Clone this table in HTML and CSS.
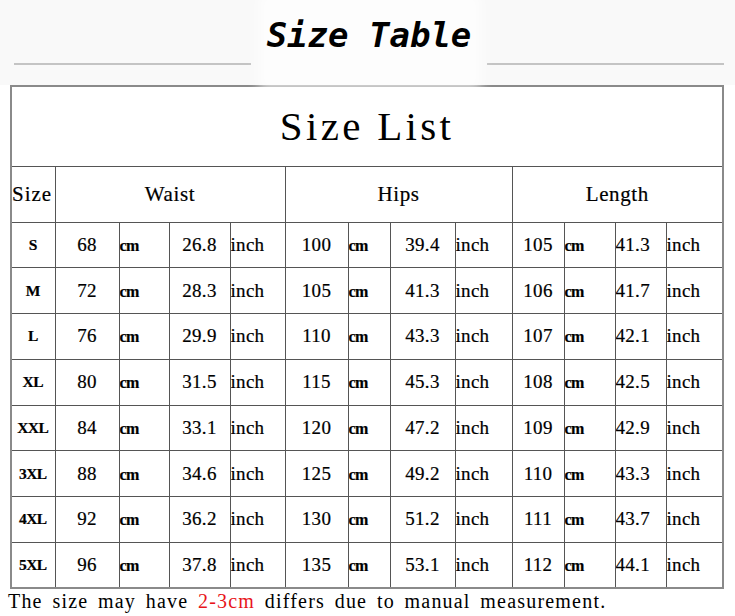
FILE: index.html
```html
<!DOCTYPE html>
<html lang="en">
<head>
<meta charset="utf-8">
<title>Size Table</title>
<link rel="stylesheet" href="styles.css">
</head>
<body>
<div class="banner">
  <div class="rule"></div>
  <div class="banner-title"><span>Size Table</span></div>
  <div class="rule"></div>
</div>
<table class="sizes">
  <colgroup>
    <col style="width:44px"><col style="width:64px"><col style="width:50px"><col style="width:61px"><col style="width:55px">
    <col style="width:63px"><col style="width:42px"><col style="width:65px"><col style="width:57px">
    <col style="width:52px"><col style="width:51px"><col style="width:51px"><col style="width:57px">
  </colgroup>
  <tr class="title-row"><td colspan="13" class="list-title">Size List</td></tr>
  <tr class="head-row">
    <td class="head size-head">Size</td>
    <td class="head" colspan="4">Waist</td>
    <td class="head" colspan="4">Hips</td>
    <td class="head" colspan="4">Length</td>
  </tr>
  <tr class="data-row"><td class="sz">S</td><td class="num">68</td><td class="unit cm">cm</td><td class="num">26.8</td><td class="unit">inch</td><td class="num">100</td><td class="unit cm">cm</td><td class="num">39.4</td><td class="unit">inch</td><td class="num">105</td><td class="unit cm">cm</td><td class="lnum">41.3</td><td class="unit">inch</td></tr>
  <tr class="data-row"><td class="sz">M</td><td class="num">72</td><td class="unit cm">cm</td><td class="num">28.3</td><td class="unit">inch</td><td class="num">105</td><td class="unit cm">cm</td><td class="num">41.3</td><td class="unit">inch</td><td class="num">106</td><td class="unit cm">cm</td><td class="lnum">41.7</td><td class="unit">inch</td></tr>
  <tr class="data-row"><td class="sz">L</td><td class="num">76</td><td class="unit cm">cm</td><td class="num">29.9</td><td class="unit">inch</td><td class="num">110</td><td class="unit cm">cm</td><td class="num">43.3</td><td class="unit">inch</td><td class="num">107</td><td class="unit cm">cm</td><td class="lnum">42.1</td><td class="unit">inch</td></tr>
  <tr class="data-row"><td class="sz">XL</td><td class="num">80</td><td class="unit cm">cm</td><td class="num">31.5</td><td class="unit">inch</td><td class="num">115</td><td class="unit cm">cm</td><td class="num">45.3</td><td class="unit">inch</td><td class="num">108</td><td class="unit cm">cm</td><td class="lnum">42.5</td><td class="unit">inch</td></tr>
  <tr class="data-row"><td class="sz">XXL</td><td class="num">84</td><td class="unit cm">cm</td><td class="num">33.1</td><td class="unit">inch</td><td class="num">120</td><td class="unit cm">cm</td><td class="num">47.2</td><td class="unit">inch</td><td class="num">109</td><td class="unit cm">cm</td><td class="lnum">42.9</td><td class="unit">inch</td></tr>
  <tr class="data-row"><td class="sz">3XL</td><td class="num">88</td><td class="unit cm">cm</td><td class="num">34.6</td><td class="unit">inch</td><td class="num">125</td><td class="unit cm">cm</td><td class="num">49.2</td><td class="unit">inch</td><td class="num">110</td><td class="unit cm">cm</td><td class="lnum">43.3</td><td class="unit">inch</td></tr>
  <tr class="data-row"><td class="sz">4XL</td><td class="num">92</td><td class="unit cm">cm</td><td class="num">36.2</td><td class="unit">inch</td><td class="num">130</td><td class="unit cm">cm</td><td class="num">51.2</td><td class="unit">inch</td><td class="num">111</td><td class="unit cm">cm</td><td class="lnum">43.7</td><td class="unit">inch</td></tr>
  <tr class="data-row"><td class="sz">5XL</td><td class="num">96</td><td class="unit cm">cm</td><td class="num">37.8</td><td class="unit">inch</td><td class="num">135</td><td class="unit cm">cm</td><td class="num">53.1</td><td class="unit">inch</td><td class="num">112</td><td class="unit cm">cm</td><td class="lnum">44.1</td><td class="unit">inch</td></tr>
</table>
<p class="note">The size may have <span class="red">2-3cm</span> differs due to manual measurement.</p>
</body>
</html>
```
FILE: styles.css
```css
html, body {
  margin: 0;
  padding: 0;
  background: #ffffff;
}

body {
  width: 735px;
  height: 616px;
  overflow: hidden;
  font-family: "Liberation Serif", "DejaVu Serif", serif;
  color: #000;
}

.banner {
  position: relative;
  display: flex;
  height: 85px;
  padding: 0 11px 0 14px;
  background: #f9f9f9;
}

.rule {
  flex: 0 0 237px;
  height: 2px;
  margin-top: 63px;
  background: #c4c4c4;
}

.banner-title {
  position: relative;
  flex: 1;
  text-align: center;
}

.banner-title::before {
  content: "";
  position: absolute;
  left: 8px;
  right: 6px;
  top: -6px;
  height: 96px;
  background: rgba(255, 255, 255, 0.7);
  filter: blur(6px);
  z-index: 1;
}

.banner-title span {
  position: relative;
  z-index: 2;
  display: inline-block;
  margin-top: 15px;
  font-family: "DejaVu Sans Mono", monospace;
  font-weight: bold;
  font-style: oblique;
  font-size: 34px;
  line-height: 40px;
  color: #000;
}

.sizes {
  margin-left: 10px;
  width: 712px;
  table-layout: fixed;
  border-collapse: collapse;
  border: 2px solid #8a8a8a;
  -webkit-text-stroke: 0.2px #000;
}

.sizes td {
  border: 1px solid #555;
  padding: 0;
  vertical-align: middle;
  white-space: nowrap;
  overflow: hidden;
}

.title-row {
  height: 80px;
}

.list-title {
  text-align: center;
  font-size: 41px;
  letter-spacing: 3.3px;
  padding-top: 4px;
  -webkit-text-stroke: 0;
}

.head-row {
  height: 56px;
}

.head {
  text-align: center;
  font-size: 21px;
  letter-spacing: 0.6px;
  padding-bottom: 3px;
}

.size-head {
  text-align: left;
  padding-left: 1px;
  letter-spacing: 1px;
}

.data-row {
  height: 45.75px;
}

.data-row td {
  font-size: 19px;
  letter-spacing: 0.3px;
}

.data-row td.sz {
  text-align: center;
  font-weight: bold;
  font-size: 15.5px;
  letter-spacing: -0.6px;
  padding-right: 1px;
}

.num {
  text-align: center;
}

.lnum {
  text-align: left;
  padding-left: 2px;
}

.unit {
  text-align: left;
  padding-left: 3px;
}

.data-row td.cm {
  font-weight: bold;
  font-size: 16px;
  letter-spacing: -0.6px;
  padding-top: 2px;
}

.note {
  margin: 0 0 0 8px;
  padding-top: 1px;
  font-size: 20px;
  line-height: 22px;
  letter-spacing: 1.2px;
  word-spacing: 3.5px;
  white-space: nowrap;
}

.red {
  color: #e8141a;
}
```
